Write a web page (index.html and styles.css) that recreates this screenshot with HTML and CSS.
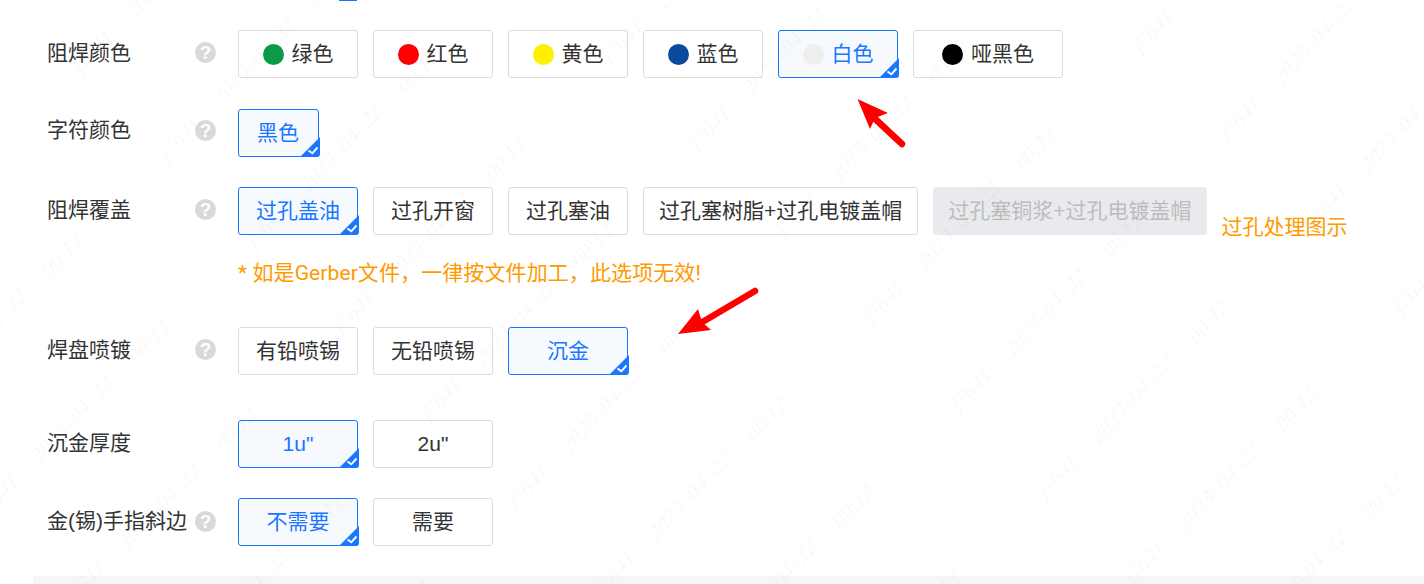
FILE: index.html
```html
<!DOCTYPE html>
<html lang="zh-CN">
<head>
<meta charset="utf-8">
<title>阻焊工艺选项</title>
<link rel="stylesheet" href="styles.css">
</head>
<body>
<svg width="0" height="0" class="defs" aria-hidden="true">
  <defs>
    <symbol id="corner" viewBox="0 0 20 20">
      <path d="M20 0V17a3 3 0 0 1-3 3H0Z" fill="#1a76ff"/>
      <path d="M8.500 13.500l3.800 2.800L17.500 10.500" fill="none" stroke="#fff" stroke-width="1.900"/>
    </symbol>
  </defs>
</svg>

<div class="sliver"></div>

<main class="form">
  <section class="row row-solder">
    <span class="label">阻焊颜色</span><span class="help">?</span>
    <div class="options">
      <button class="opt"><i class="dot dot-green"></i>绿色</button>
      <button class="opt"><i class="dot dot-red"></i>红色</button>
      <button class="opt"><i class="dot dot-yellow"></i>黄色</button>
      <button class="opt"><i class="dot dot-blue"></i>蓝色</button>
      <button class="opt is-on"><i class="dot dot-white"></i>白色<svg class="tick"><use href="#corner"/></svg></button>
      <button class="opt opt-wide"><i class="dot dot-black"></i>哑黑色</button>
    </div>
  </section>

  <section class="row row-char">
    <span class="label">字符颜色</span><span class="help">?</span>
    <div class="options">
      <button class="opt opt-short is-on">黑色<svg class="tick"><use href="#corner"/></svg></button>
    </div>
  </section>

  <section class="row row-cover">
    <span class="label">阻焊覆盖</span><span class="help">?</span>
    <div class="options">
      <button class="opt is-on">过孔盖油<svg class="tick"><use href="#corner"/></svg></button>
      <button class="opt">过孔开窗</button>
      <button class="opt">过孔塞油</button>
      <button class="opt">过孔塞树脂+过孔电镀盖帽</button>
      <button class="opt is-off">过孔塞铜浆+过孔电镀盖帽</button>
      <a class="link">过孔处理图示</a>
    </div>
    <p class="note">* 如是Gerber文件，一律按文件加工，此选项无效!</p>
  </section>

  <section class="row row-pad">
    <span class="label">焊盘喷镀</span><span class="help">?</span>
    <div class="options">
      <button class="opt">有铅喷锡</button>
      <button class="opt">无铅喷锡</button>
      <button class="opt is-on">沉金<svg class="tick"><use href="#corner"/></svg></button>
    </div>
  </section>

  <section class="row row-thick">
    <span class="label">沉金厚度</span>
    <div class="options">
      <button class="opt is-on">1u"<svg class="tick"><use href="#corner"/></svg></button>
      <button class="opt">2u"</button>
    </div>
  </section>

  <section class="row row-bevel">
    <span class="label">金(锡)手指斜边</span><span class="help">?</span>
    <div class="options">
      <button class="opt is-on">不需要<svg class="tick"><use href="#corner"/></svg></button>
      <button class="opt">需要</button>
    </div>
  </section>
</main>

<div class="footer-bar"></div>

<svg class="arrows" viewBox="0 0 1424 584" aria-hidden="true">
  <path d="M902 144L872 116" stroke="#f00" stroke-width="6.500" stroke-linecap="round" fill="none"/>
  <path d="M857.500 99L888 113L875 118L870 129Z" fill="#f00"/>
  <path d="M755 291L699 324" stroke="#f00" stroke-width="6.500" stroke-linecap="round" fill="none"/>
  <path d="M678 334L698 309L702 322L711 330Z" fill="#f00"/>
</svg>

<svg class="watermark" viewBox="0 0 1424 584" aria-hidden="true">
  <defs>
    <g id="wm-tile">
      <text transform="translate(0 0) rotate(-47) skewX(-14)" text-anchor="middle">j7641</text>
      <text transform="translate(161 10) rotate(-47) skewX(-14)" text-anchor="middle">2023–04–22</text>
      <text transform="translate(325 20) rotate(-47) skewX(-14)" text-anchor="middle">00:12</text>
    </g>
    <g id="wm-row">
      <use href="#wm-tile" x="-530" y="10"/>
      <use href="#wm-tile"/>
      <use href="#wm-tile" x="530" y="-10"/>
      <use href="#wm-tile" x="1060" y="-20"/>
    </g>
  </defs>
  <use href="#wm-row" x="184" y="144"/>
  <use href="#wm-row" x="271" y="231"/>
  <use href="#wm-row" x="358" y="318"/>
  <use href="#wm-row" x="445" y="405"/>
  <use href="#wm-row" x="532" y="492"/>
  <use href="#wm-row" x="619" y="579"/>
  <use href="#wm-row" x="97" y="57"/>
  <use href="#wm-row" x="10" y="-30"/>
  <use href="#wm-row" x="-77" y="-117"/>
</svg>
</body>
</html>
```

FILE: styles.css
```css
html, body {
  margin: 0;
  height: 584px;
  overflow: hidden;
  background: #fff;
}

body {
  position: relative;
  font-family: "Liberation Sans", "Noto Sans CJK SC", sans-serif;
  font-size: 21px;
  color: #333;
}

.defs {
  position: absolute;
}

.sliver {
  width: 18px;
  height: 1px;
  margin-left: 339px;
  background: #1a76ff;
}

.form {
  padding-left: 47px;
}

.row {
  display: grid;
  grid-template-columns: 148px 21px 1fr;
  align-items: start;
}

.row-solder { margin-top: 29px; }
.row-char { margin-top: 31px; }
.row-cover { margin-top: 30px; }
.row-pad { margin-top: 41px; }
.row-thick { margin-top: 45px; }
.row-bevel { margin-top: 30px; }

.label {
  grid-column: 1;
  line-height: 46px;
  color: #333;
  white-space: nowrap;
}

.row-char .label { margin-top: -2px; }

.help {
  grid-column: 2;
  width: 21px;
  height: 21px;
  margin-top: 12px;
  border-radius: 50%;
  background: #d9d9d9;
  color: #fff;
  font-size: 19px;
  font-weight: 700;
  line-height: 21px;
  text-align: center;
}

.row-char .help { margin-top: 11px; }
.row-bevel .help { margin-top: 13px; }

.options {
  grid-column: 3;
  display: flex;
  flex-wrap: nowrap;
  gap: 15px;
  margin-left: 22px;
}

.opt {
  position: relative;
  display: inline-flex;
  align-items: center;
  justify-content: center;
  gap: 8px;
  box-sizing: border-box;
  min-width: 120px;
  height: 48px;
  padding: 0 15px;
  border: 1px solid #dcdcdc;
  border-radius: 3px;
  background: #fff;
  color: #333;
  font: inherit;
  line-height: 48px;
  white-space: nowrap;
}

.opt-wide { min-width: 150px; }
.opt-short { min-width: 81px; padding: 0 18px 0 17px; }

.is-on {
  border-color: #1a76ff;
  background: #f6faff;
  color: #1a76ff;
}

.is-off {
  padding: 0 14px;
  border-color: #e9eaed;
  background: #e9eaed;
  color: #bcbcbc;
}

.tick {
  position: absolute;
  right: -2px;
  bottom: -1px;
  width: 20px;
  height: 20px;
}

.dot {
  flex: none;
  width: 21px;
  height: 21px;
  border-radius: 50%;
}

.dot-green { background: #0b9b48; }
.dot-red { background: #ff0000; }
.dot-yellow { background: #fff000; }
.dot-blue { background: #0a4a9f; }
.dot-white { background: #eeeeee; }
.dot-black { background: #000; }

.link {
  align-self: flex-end;
  margin-bottom: -4px;
  color: #ff9900;
  line-height: 24px;
  white-space: nowrap;
}

.note {
  grid-column: 3;
  margin: 25px 0 0 22px;
  color: #ff9900;
  font-family: Roboto, "Noto Sans CJK SC", sans-serif;
  letter-spacing: 0.1px;
  line-height: 26px;
  white-space: nowrap;
}

.footer-bar {
  position: absolute;
  left: 33px;
  right: 0;
  top: 576px;
  height: 8px;
  background: #f5f6f7;
}

.arrows,
.watermark {
  position: absolute;
  left: 0;
  top: 0;
  width: 1424px;
  height: 584px;
  pointer-events: none;
}

.watermark text {
  font-family: "Liberation Serif", serif;
  font-size: 22px;
  fill: rgba(0, 0, 0, 0.035);
}
```
